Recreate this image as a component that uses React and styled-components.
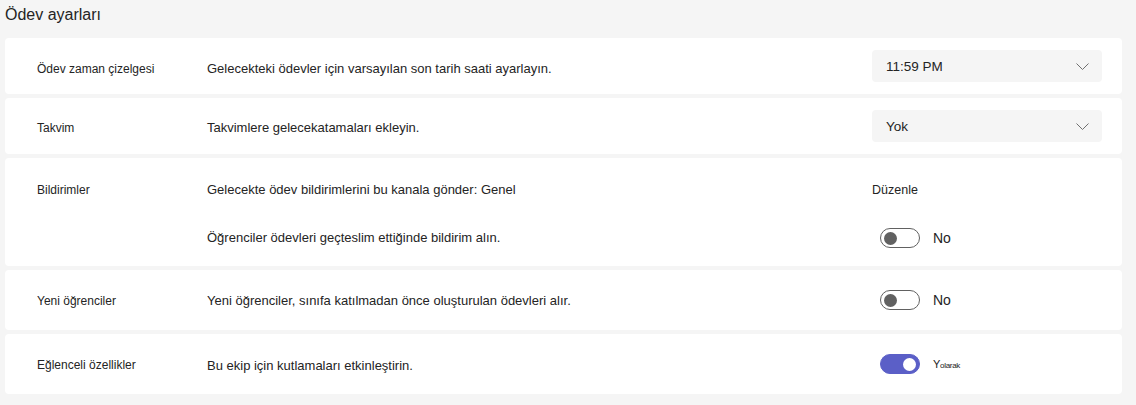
import React from 'react'
import styled, { createGlobalStyle } from 'styled-components'

const Global = createGlobalStyle`
    body {
        margin: 0;
        background: #f5f5f5;
        font-family: "Segoe UI", "Liberation Sans", Arial, sans-serif;
        color: #242424;
    }
`

const Page = styled.div`
    padding: 4px 14px 10px 5px;
    display: flex;
    flex-direction: column;
    gap: 4px;
`

const Heading = styled.h2`
    font-size: 16px;
    font-weight: 400;
    margin: 0 0 8px 0;
    line-height: 22px;
`

const Card = styled.div`
    background: white;
    border-radius: 4px;
    display: grid;
    grid-template-columns: 170px 1fr 230px;
    align-items: center;
    row-gap: ${p => p.$rowGap || 0}px;
    padding: ${p => p.$pad || '0 20px 0 32px'};
    min-height: ${p => p.$height}px;
    box-sizing: border-box;
`

const Label = styled.div`
    font-size: 12px;
    line-height: 28px;
    padding-top: ${p => p.$shift || 0}px;
`

const Desc = styled.div`
    font-size: 13px;
    line-height: 28px;
    padding-top: ${p => p.$shift || 0}px;
`

const Select = styled.div`
    height: 32px;
    background: #f5f5f5;
    border-radius: 4px;
    display: flex;
    align-items: center;
    justify-content: space-between;
    padding: 0 13px 0 14px;
    font-size: 13.5px;
`

const ToggleRow = styled.div`
    display: flex;
    align-items: center;
    gap: 13px;
    padding-left: 8px;
    font-size: 14px;
    padding-top: ${p => p.$shift || 0}px;
`

const Track = styled.span`
    width: 40px;
    height: 20px;
    box-sizing: border-box;
    border-radius: 10px;
    border: 1px solid ${p => (p.$on ? '#5b5fc7' : '#616161')};
    background: ${p => (p.$on ? '#5b5fc7' : 'white')};
    display: flex;
    align-items: center;
    justify-content: ${p => (p.$on ? 'flex-end' : 'flex-start')};
    padding: 0 3px;
`

const Knob = styled.span`
    width: 13px;
    height: 13px;
    border-radius: 50%;
    background: ${p => (p.$on ? 'white' : '#616161')};
`

const Link = styled.div`
    font-size: 12.5px;
    line-height: 28px;
`

const Small = styled.span`
    font-size: 11px;
    letter-spacing: -0.3px;
    span {
        font-size: 8px;
    }
`

const Chevron = () => (
    <svg width="13" height="7" viewBox="0 0 13 7">
        <path d="M0.5 0.5 L6.5 6.5 L12.5 0.5" fill="none" stroke="#707070" strokeWidth="1" />
    </svg>
)

const Toggle = ({ on, children, shift }) => (
    <ToggleRow $shift={shift}>
        <Track $on={on}><Knob $on={on} /></Track>
        {children}
    </ToggleRow>
)

const App = () => {
    return (
        <>
            <Global />
            <Page>
                <Heading>Ödev ayarları</Heading>

                <Card $height={56}>
                    <Label $shift={6}>Ödev zaman çizelgesi</Label>
                    <Desc $shift={6}>Gelecekteki ödevler için varsayılan son tarih saati ayarlayın.</Desc>
                    <Select>11:59 PM <Chevron /></Select>
                </Card>

                <Card $height={56}>
                    <Label $shift={4}>Takvim</Label>
                    <Desc $shift={4}>Takvimlere gelecekatamaları ekleyin.</Desc>
                    <Select>Yok <Chevron /></Select>
                </Card>

                <Card $height={108} $rowGap={20} $pad="18px 20px 14px 32px">
                    <Label>Bildirimler</Label>
                    <Desc>Gelecekte ödev bildirimlerini bu kanala gönder: Genel</Desc>
                    <Link>Düzenle</Link>
                    <div />
                    <Desc>Öğrenciler ödevleri geçteslim ettiğinde bildirim alın.</Desc>
                    <Toggle>No</Toggle>
                </Card>

                <Card $height={60}>
                    <Label $shift={2}>Yeni öğrenciler</Label>
                    <Desc $shift={2}>Yeni öğrenciler, sınıfa katılmadan önce oluşturulan ödevleri alır.</Desc>
                    <Toggle>No</Toggle>
                </Card>

                <Card $height={60}>
                    <Label $shift={2}>Eğlenceli özellikler</Label>
                    <Desc $shift={4}>Bu ekip için kutlamaları etkinleştirin.</Desc>
                    <Toggle on>
                        <Small>Y<span>olarak</span></Small>
                    </Toggle>
                </Card>
            </Page>
        </>
    )
}

export default App
